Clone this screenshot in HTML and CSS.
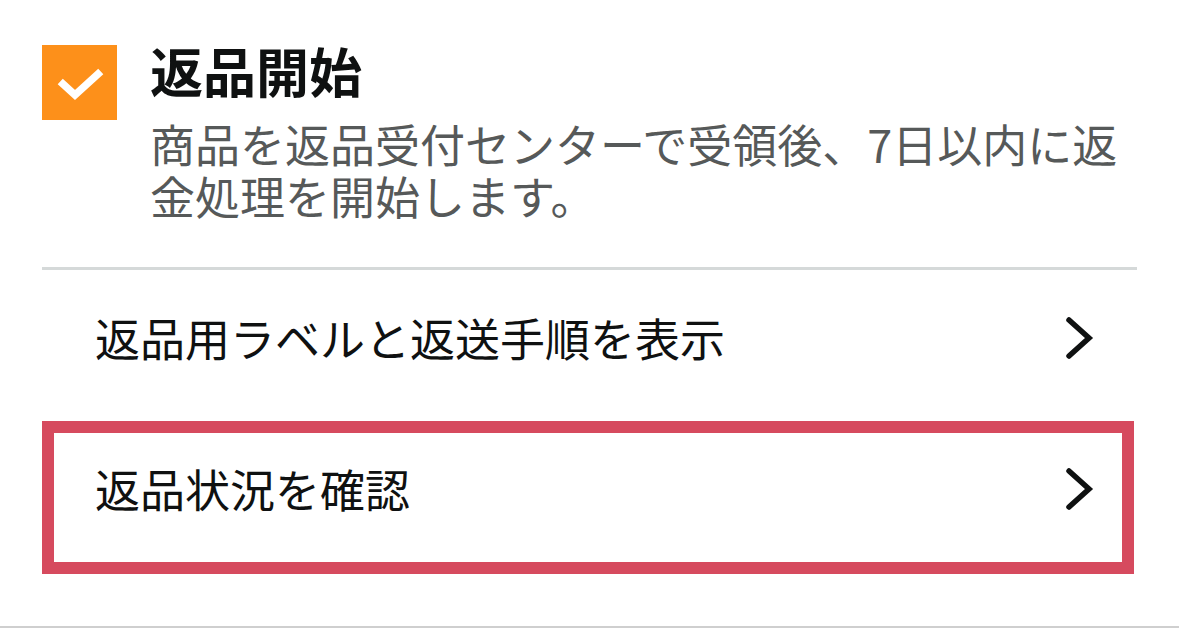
FILE: index.html
```html
<!DOCTYPE html>
<html lang="ja">
<head>
<meta charset="utf-8">
<link rel="stylesheet" href="styles.css">
</head>
<body>
<div class="page">
  <div class="status">
    <div class="check">
      <svg width="75" height="75" viewBox="0 0 75 75"><polyline points="21,39 33,50 56,29" fill="none" stroke="#fff" stroke-width="7.5" stroke-linecap="square" stroke-linejoin="miter"/></svg>
    </div>
    <div class="status-text">
      <div class="title">返品開始</div>
      <div class="desc">商品を返品受付センターで受領後、7日以内に返金処理を開始します。</div>
    </div>
  </div>
  <div class="divider"></div>
  <div class="rows">
    <div class="row">
      <span class="row-label">返品用ラベルと返送手順を表示</span>
      <svg class="chev" width="30" height="44" viewBox="0 0 30 44"><polyline points="4,4 24,22 4,40" fill="none" stroke="#0f1111" stroke-width="5.5" stroke-linecap="round" stroke-linejoin="miter"/></svg>
    </div>
    <div class="row highlight">
      <span class="row-label">返品状況を確認</span>
      <svg class="chev" width="30" height="44" viewBox="0 0 30 44"><polyline points="4,4 24,22 4,40" fill="none" stroke="#0f1111" stroke-width="5.5" stroke-linecap="round" stroke-linejoin="miter"/></svg>
    </div>
  </div>
  <div class="bottom-line"></div>
</div>
</body>
</html>
```
FILE: styles.css
```css
html, body {
  margin: 0;
  padding: 0;
  background: #ffffff;
}
body {
  font-family: "Noto Sans CJK JP", "Noto Sans", sans-serif;
  color: #0f1111;
  width: 1179px;
  height: 628px;
  overflow: hidden;
}
.page {
  position: relative;
  height: 628px;
}
.status {
  display: flex;
  padding: 45px 0 0 42px;
  gap: 33px;
}
.check {
  width: 75px;
  height: 75px;
  background: #fd901a;
  flex: none;
}
.check svg {
  display: block;
}
.status-text {
  width: 987px;
}
.title {
  font-size: 53px;
  font-weight: 700;
  line-height: 62px;
  margin-top: -6px;
}
.desc {
  font-size: 45px;
  line-height: 52px;
  color: #565959;
  margin-top: 17px;
}
.divider {
  margin: 45px 0 0 42px;
  width: 1095px;
  height: 3px;
  background: #d5d9d9;
}
.rows {
  display: flex;
  flex-direction: column;
  margin-left: 42px;
  width: 1092px;
}
.row {
  display: flex;
  align-items: center;
  justify-content: space-between;
  box-sizing: border-box;
  height: 151px;
  padding: 0 39px 16px 53px;
}
.row-label {
  font-size: 45px;
  line-height: 60px;
  color: #0f1111;
}
.chev {
  display: block;
}
.highlight {
  height: 153px;
  border: 12px solid #d64a5e;
  padding: 0 27px 18px 41px;
}
.bottom-line {
  position: absolute;
  left: 0;
  right: 0;
  top: 626px;
  height: 2px;
  background: #cfcfcf;
}
```
